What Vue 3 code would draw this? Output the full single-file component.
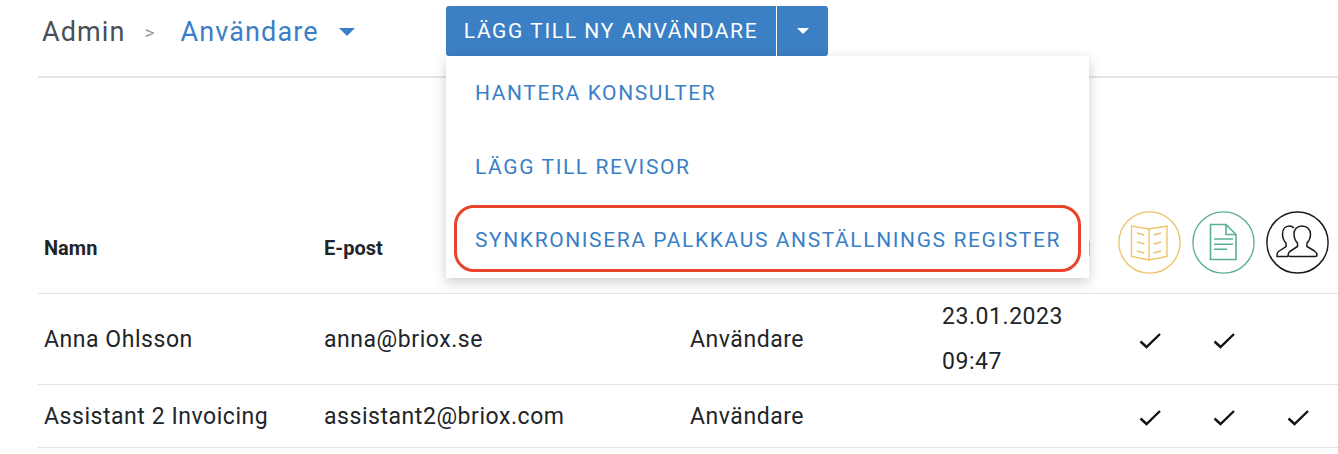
<template>
  <div class="page">
    <header class="topbar">
      <div class="crumbs">
        <span class="crumb-root">Admin</span>
        <span class="crumb-sep">&gt;</span>
        <span class="crumb-current">Användare</span>
        <span class="caret caret-blue"></span>
      </div>
      <div class="actions">
        <div class="btn-group">
          <button class="btn-main">LÄGG TILL NY ANVÄNDARE</button>
          <button class="btn-toggle"><span class="caret caret-white"></span></button>
        </div>
        <ul class="menu">
          <li v-for="item in menuItems" :key="item.label" class="menu-item">
            <span class="menu-label" :class="{ marked: item.marked }">{{ item.label }}</span>
          </li>
        </ul>
      </div>
    </header>

    <div class="row head-row">
      <div class="cell head-cell">Namn</div>
      <div class="cell head-cell">E-post</div>
      <div class="cell"></div>
      <div class="cell"><div class="head-tick"></div></div>
      <div class="cell icon-cell">
        <svg width="63" height="63" viewBox="0 0 63 63" fill="none" stroke="#eec468" stroke-width="1.4">
          <circle cx="31.5" cy="31.500" r="30.6" />
          <path d="M31 18 13.500 15V45.500L31 49 49 45.500V15ZM31 18V49" />
          <path d="M19 22 26.500 24M19 31 26.500 33M19 40 26.500 42M43 22 35.500 24M43 31 35.500 33M43 40 35.500 42" />
        </svg>
      </div>
      <div class="cell icon-cell">
        <svg width="63" height="63" viewBox="0 0 63 63" fill="none" stroke="#5bb094" stroke-width="1.6">
          <circle cx="31.5" cy="31.500" r="30.6" stroke-width="1.4" />
          <path d="M18.500 13.500H34L44 23.500V48.500H18.500ZM34 13.500V23.500H44" />
          <path d="M22 28H41M22 33.300H41M22 38.300H35" />
        </svg>
      </div>
      <div class="cell icon-cell">
        <svg width="63" height="63" viewBox="0 0 63 63" fill="none" stroke="#1b1b1b" stroke-width="1.5">
          <circle cx="31.5" cy="31.500" r="30.6" />
          <path d="M28 17C26.500 15.500 25 15 23.500 15 19 15 16.500 18.500 16.500 23 16.500 27 18 30 20 32V35.500L12.500 40.500C11.500 41.300 11 42.300 11 44V45.500H22" />
          <path d="M36 15C31 15 28 18.500 28 23 28 27 29.500 30 31.500 32V35.500L24.500 40C23 41 22 42.500 22 44 22 45.500 23 45.500 24.500 45.500H49C50.500 45.500 51 45 51 44 51 42.500 50 41 48.500 40L41 35.500V32C43 30 44.500 27 44.500 23 44.500 18.500 41 15 36 15Z" />
        </svg>
      </div>
    </div>

    <div v-for="user in users" :key="user.email" class="row" :class="user.rowClass">
      <div class="cell">{{ user.name }}</div>
      <div class="cell">{{ user.email }}</div>
      <div class="cell">{{ user.role }}</div>
      <div class="cell date-cell">
        <span v-for="part in user.date" :key="part">{{ part }}</span>
      </div>
      <div v-for="(on, i) in user.checks" :key="i" class="cell icon-cell">
        <svg v-if="on" class="check" width="22" height="16" viewBox="0 0 22 16" fill="none" stroke="#111" stroke-width="2.4">
          <path d="M1.500 8.500 7.500 14 21 1" />
        </svg>
      </div>
    </div>
  </div>
</template>

<script setup>
const menuItems = [
  { label: 'HANTERA KONSULTER' },
  { label: 'LÄGG TILL REVISOR' },
  { label: 'SYNKRONISERA PALKKAUS ANSTÄLLNINGS REGISTER', marked: true },
]

const users = [
  {
    name: 'Anna Ohlsson',
    email: 'anna@briox.se',
    role: 'Användare',
    date: ['23.01.2023', '09:47'],
    checks: [true, true, false],
    rowClass: 'row-tall',
  },
  {
    name: 'Assistant 2 Invoicing',
    email: 'assistant2@briox.com',
    role: 'Användare',
    date: [],
    checks: [true, true, true],
    rowClass: 'row-short',
  },
]
</script>

<style>
html,
body {
  margin: 0;
  background: #fff;
  overflow: hidden;
}
</style>

<style scoped>
.page {
  padding-left: 38px;
  font-family: Roboto, "Liberation Sans", sans-serif;
  color: #212529;
}

.topbar {
  box-sizing: border-box;
  height: 78px;
  padding: 6px 0 0 4px;
  display: flex;
  align-items: flex-start;
  border-bottom: 2px solid #e4e4e4;
}

.crumbs {
  box-sizing: border-box;
  width: 404px;
  height: 50px;
  padding-top: 2px;
  display: flex;
  align-items: center;
  font-size: 27px;
  letter-spacing: 1.1px;
}
.crumb-root {
  color: #495057;
}
.crumb-sep {
  color: #999;
  font-size: 19px;
  margin: 0 25px 0 19px;
}
.crumb-current {
  color: #3a7fc5;
}

.caret {
  display: inline-block;
  width: 0;
  height: 0;
  border-left: 8px solid transparent;
  border-right: 8px solid transparent;
  border-top: 8px solid #3a7fc5;
}
.caret-blue {
  margin-left: 20px;
}
.caret-white {
  border-left-width: 6px;
  border-right-width: 6px;
  border-top: 6px solid #fff;
}

.actions {
  position: relative;
}

.btn-group {
  display: flex;
  gap: 1px;
  width: 382px;
  height: 50px;
  background: #fff;
}
.btn-main,
.btn-toggle {
  border: none;
  padding: 0;
  height: 50px;
  background: #3b7fc4;
  color: #fff;
  font-family: inherit;
}
.btn-main {
  width: 330px;
  border-radius: 3px 0 0 3px;
  font-size: 21px;
  letter-spacing: 1.6px;
}
.btn-toggle {
  width: 51px;
  border-radius: 0 3px 3px 0;
  display: flex;
  align-items: center;
  justify-content: center;
}

.menu {
  position: absolute;
  top: 50px;
  left: 0;
  z-index: 5;
  width: 643px;
  height: 222px;
  margin: 0;
  padding: 0;
  list-style: none;
  background: #fff;
  box-shadow: 0 4px 12px rgba(0, 0, 0, 0.2);
}
.menu-item {
  height: 74px;
  display: flex;
  align-items: center;
  padding-left: 8px;
}
.menu-label {
  display: flex;
  align-items: center;
  box-sizing: border-box;
  width: 627px;
  height: 67px;
  padding-left: 21px;
  color: #3a7fc5;
  font-size: 21px;
  letter-spacing: 1.6px;
  white-space: nowrap;
}
.menu-label.marked {
  align-self: flex-start;
  margin-top: 1px;
  padding-top: 3px;
  border: 3px solid #e8432a;
  border-radius: 20px;
  padding-left: 18px;
}

.row {
  display: grid;
  grid-template-columns: 280px 366px 252px 176px 74px 74px 74px;
  border-bottom: 1px solid #e4e4e4;
  font-size: 23px;
  letter-spacing: 0.55px;
  align-items: center;
}
.head-row {
  height: 216px;
  box-sizing: border-box;
  padding-bottom: 19px;
  align-items: end;
}
.row-tall {
  height: 91px;
  box-sizing: border-box;
}
.row-short {
  height: 63px;
  box-sizing: border-box;
}

.cell {
  padding-left: 6px;
  white-space: nowrap;
}
.head-cell {
  font-size: 20px;
  font-weight: 700;
  letter-spacing: 0;
  padding-bottom: 14px;
}
.head-tick {
  width: 1px;
  height: 15px;
  margin: 0 0 18px 147px;
  background: #ccc;
}
.icon-cell {
  padding-left: 0;
  display: flex;
  justify-content: center;
}
.check {
  margin: 3px 0 0 1px;
}
.date-cell {
  display: flex;
  flex-direction: column;
  gap: 18px;
}
</style>
